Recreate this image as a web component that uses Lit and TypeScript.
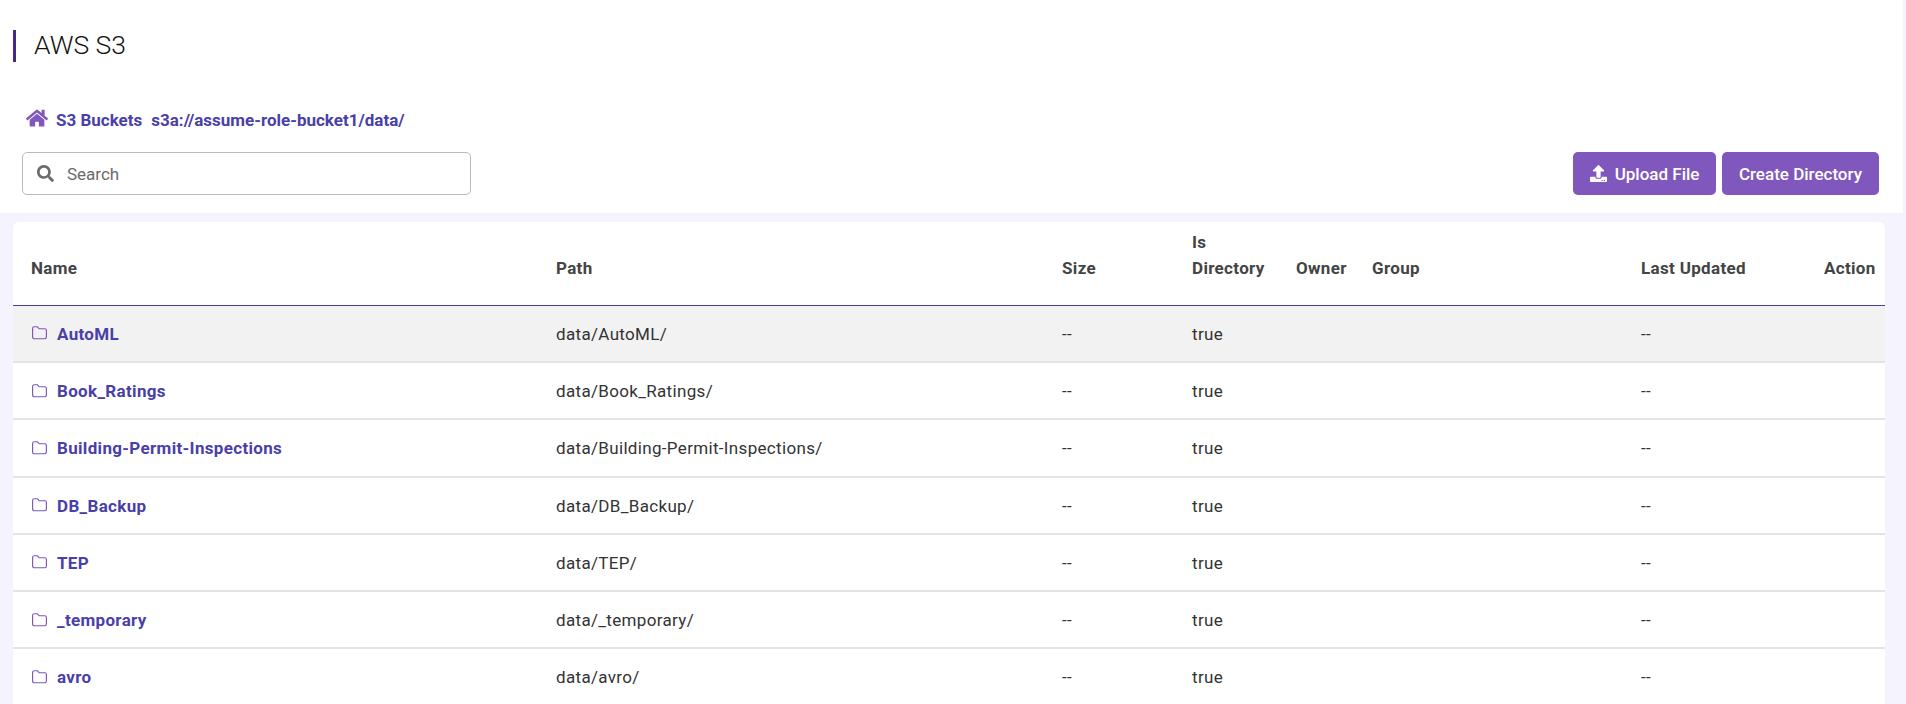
import { LitElement, html, css, svg } from 'lit'
import { customElement } from 'lit/decorators.js'

const rows = ['AutoML', 'Book_Ratings', 'Building-Permit-Inspections', 'DB_Backup', 'TEP', '_temporary', 'avro']

const folderIcon = svg`<path d="M1.5 3.2c0-.9.7-1.6 1.6-1.6h3l1.6 1.9h5.2c.9 0 1.6.7 1.6 1.6v6.2c0 .9-.7 1.6-1.6 1.6H3.1c-.9 0-1.6-.7-1.6-1.6z" fill="none" stroke="currentColor" stroke-width="1.1"/>`

@customElement('app-root')
export class AppRoot extends LitElement {
  static styles = css`
    :host {
      display: block;
      height: 704px;
      overflow: hidden;
      background: #f5f4fe;
      font-family: Roboto, 'Liberation Sans', sans-serif;
      color: #333;
    }
    .top {
      background: #fff;
      height: 213px;
      margin-right: 3px;
      box-sizing: border-box;
      padding: 30px 0 0 13px;
    }
    .title {
      border-left: 3px solid #44288c;
      height: 32px;
      line-height: 30px;
      padding-left: 18px;
      font-size: 26.5px;
      font-weight: 300;
      color: #111;
    }
    .crumbs {
      display: flex;
      align-items: center;
      margin: 46px 0 0 13px;
      height: 24px;
      font-size: 17px;
      font-weight: 700;
      color: #4a3fa8;
    }
    .crumbs svg {
      width: 22px;
      height: 20px;
      margin-right: 8px;
      margin-top: -5px;
      color: #7f57bd;
    }
    .crumbs span + span {
      margin-left: 9px;
    }
    .tools {
      display: flex;
      justify-content: space-between;
      margin: 20px 24px 0 9px;
    }
    .search {
      display: flex;
      align-items: center;
      width: 449px;
      height: 43px;
      box-sizing: border-box;
      border: 1px solid #bbb;
      border-radius: 5px;
      padding-left: 14px;
      font-size: 17px;
      color: #6b6b6b;
    }
    .search svg {
      width: 17px;
      height: 17px;
      margin-right: 13px;
    }
    .actions {
      display: flex;
      gap: 6px;
    }
    .btn {
      display: flex;
      align-items: center;
      height: 43px;
      box-sizing: border-box;
      padding: 0 16.5px;
      border-radius: 5px;
      background: #7f57bd;
      color: #fff;
      font-size: 17px;
      font-weight: 500;
    }
    .btn svg {
      width: 17px;
      height: 17px;
      margin-right: 8px;
    }
    .actions .btn:last-child {
      padding: 0 17px;
    }
    .card {
      margin: 9px 21px 0 13px;
      background: #fff;
      border-radius: 6px 6px 0 0;
    }
    table {
      width: 100%;
      table-layout: fixed;
      border-collapse: collapse;
      font-size: 17px;
      letter-spacing: 0.33px;
    }
    th {
      height: 83px;
      padding: 0;
      vertical-align: bottom;
      text-align: left;
      font-weight: 700;
      line-height: 26px;
      padding-bottom: 24px;
      box-sizing: border-box;
      color: #444;
      border-bottom: 1px solid #4a3fa8;
    }
    td {
      height: 57.2px;
      padding: 1px 0 0;
      box-sizing: border-box;
      border-bottom: 2px solid #e4e4e4;
      color: #333;
    }
    tr.hover td {
      background: #f2f2f2;
    }
    .pad {
      padding-left: 18px;
    }
    .name {
      display: flex;
      align-items: center;
      font-weight: 700;
      color: #4a3fa8;
    }
    .name svg {
      width: 17px;
      height: 15px;
      margin-right: 9px;
      margin-top: -2px;
      color: #7f57bd;
    }
  `

  render() {
    return html`
      <div class="top">
        <div class="title">AWS S3</div>
        <div class="crumbs">
          <svg viewBox="0 0 576 512" fill="currentColor">
            <path d="M280 148 96 300v164c0 9 7 16 16 16l112-.3c9 0 16-7 16-16V368c0-9 7-16 16-16h64c9 0 16 7 16 16v95.6c0 9 7 16 16 16l112 .4c9 0 16-7 16-16V300L296 148c-4-3-12-3-16 0z"/>
            <path d="M572 263 488 194V54c0-7-5-12-12-12h-56c-7 0-12 5-12 12v73L318 53c-18-15-43-15-61 0L4 263c-5 4-6 12-2 17l26 31c4 5 12 6 17 2L280 120c4-3 12-3 16 0l235 193c5 4 13 3 17-2l26-31c4-5 3-13-2-17z"/>
          </svg>
          <span>S3 Buckets</span><span>s3a://assume-role-bucket1/data/</span>
        </div>
        <div class="tools">
          <div class="search">
            <svg viewBox="0 0 512 512" fill="currentColor">
              <path d="M505 443 405 343c-4-4-11-7-17-7h-16c28-35 44-80 44-128C416 93 323 0 208 0S0 93 0 208s93 208 208 208c48 0 93-16 128-44v16c0 6 3 13 7 17l100 100c9 9 25 9 34 0l28-28c9-10 9-25 0-34zM208 336c-71 0-128-57-128-128S137 80 208 80s128 57 128 128-57 128-128 128z"/>
            </svg>
            Search
          </div>
          <div class="actions">
            <div class="btn">
              <svg viewBox="0 0 512 512" fill="currentColor">
                <path d="M296 384h-80c-13 0-24-11-24-24V192h-88c-18 0-27-21-14-34L242 6c8-8 20-8 28 0l152 152c13 13 4 34-14 34h-88v168c0 13-11 24-24 24zm216-8v112c0 13-11 24-24 24H24c-13 0-24-11-24-24V376c0-13 11-24 24-24h136v8c0 31 25 56 56 56h80c31 0 56-25 56-56v-8h136c13 0 24 11 24 24zm-124 88c0-11-9-20-20-20s-20 9-20 20 9 20 20 20 20-9 20-20zm64 0c0-11-9-20-20-20s-20 9-20 20 9 20 20 20 20-9 20-20z"/>
              </svg>
              Upload File
            </div>
            <div class="btn">Create Directory</div>
          </div>
        </div>
      </div>
      <div class="card">
        <table>
          <colgroup>
            <col style="width:543px" /><col style="width:506px" /><col style="width:130px" />
            <col style="width:104px" /><col style="width:76px" /><col style="width:269px" />
            <col style="width:183px" /><col />
          </colgroup>
          <thead>
            <tr>
              <th class="pad">Name</th><th>Path</th><th>Size</th><th>Is<br />Directory</th>
              <th>Owner</th><th>Group</th><th>Last Updated</th><th>Action</th>
            </tr>
          </thead>
          <tbody>
            ${rows.map(
              (r, i) => html`
                <tr class=${i === 0 ? 'hover' : ''}>
                  <td class="pad">
                    <div class="name"><svg viewBox="0 0 16 14">${folderIcon}</svg>${r}</div>
                  </td>
                  <td>data/${r}/</td>
                  <td>--</td>
                  <td>true</td>
                  <td></td>
                  <td></td>
                  <td>--</td>
                  <td></td>
                </tr>
              `
            )}
          </tbody>
        </table>
      </div>
    `
  }
}
